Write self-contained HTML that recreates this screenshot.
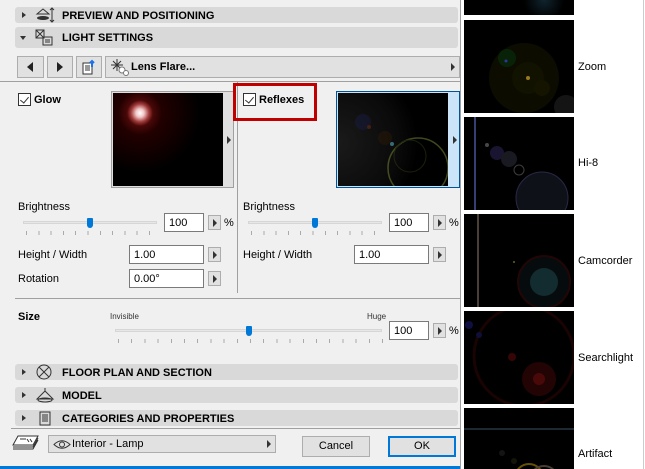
<!DOCTYPE html>
<html><head><meta charset="utf-8"><style>
*{box-sizing:border-box;margin:0;padding:0}
html,body{width:645px;height:469px;overflow:hidden}
body{background:#fff;font-family:"Liberation Sans",sans-serif;font-size:11px;color:#000;position:relative}
.a{position:absolute}
#dlg{left:0;top:0;width:461px;height:469px;background:#f0f0f0;border-right:1px solid #a0a0a0;overflow:hidden}
.hdr{position:absolute;left:15px;width:443px;background:#d9d9d9;border-radius:3px;font-weight:bold;font-size:11px;line-height:16px}
.hdr .t{position:absolute;left:47px;top:1px}
.hdr .tri{position:absolute;left:7px;top:5px;width:0;height:0;border-left:4px solid #333;border-top:3px solid transparent;border-bottom:3px solid transparent}
.btn{position:absolute;background:#e1e1e1;border:1px solid #adadad}
.inp{position:absolute;background:#fff;border:1px solid #7a7a7a;padding-left:4px;padding-top:1px;font-size:11px;line-height:16px}
.ab{position:absolute;width:13px;height:15px;background:#e1e1e1;border:1px solid #adadad}
.ab:after{content:"";position:absolute;left:4px;top:3px;border-left:4px solid #333;border-top:4px solid transparent;border-bottom:4px solid transparent}
.cb{position:absolute;width:13px;height:13px;border:1px solid #333;background:#fff}
.cb:after{content:"";position:absolute;left:3px;top:1px;width:4px;height:7px;border-right:1.5px solid #333;border-bottom:1.5px solid #333;transform:rotate(40deg)}
.track{position:absolute;height:3px;background:#e7e7e7;border:1px solid #d6d6d6}
.thumb{position:absolute;width:6px;height:10px;background:#0078d7;border-radius:1px 1px 3px 3px}
.ticks{position:absolute;height:4px;background:repeating-linear-gradient(90deg,#aaa 0 1px,transparent 1px 12.3px)}
.th{position:absolute;left:464px;width:110px;background:#000;overflow:hidden}
.th svg{opacity:.6;display:block}
.lbl{position:absolute;left:578px;font-size:11px}
</style></head><body>
<div id="dlg" class="a">
<div class="hdr" style="top:7px;height:16px"><div class="tri"></div>
<svg class="a" style="left:19px;top:0" width="22" height="16"><path d="M3 7 L9 2 L15 7 Z" fill="none" stroke="#333"/><ellipse cx="9" cy="11" rx="6" ry="2" fill="#333"/><path d="M18 1v14M16 3l2-2 2 2M16 13l2 2 2-2" stroke="#333" fill="none"/></svg>
<div class="t">PREVIEW AND POSITIONING</div></div>
<div class="hdr" style="top:27px;height:21px;line-height:21px"><div class="tri" style="left:5px;top:9px;border-left:3px solid transparent;border-right:3px solid transparent;border-top:4px solid #333;border-bottom:0"></div>
<svg class="a" style="left:19px;top:2px" width="22" height="17"><rect x="2" y="1" width="8" height="8" fill="none" stroke="#333"/><path d="M2 1l8 8M10 1l-8 8" stroke="#333"/><rect x="9" y="8" width="9" height="8" fill="none" stroke="#333"/><path d="M11 11h5M11 13h5" stroke="#333"/></svg>
<div class="t" style="top:1px">LIGHT SETTINGS</div></div>
<div class="btn" style="left:17px;top:56px;width:27px;height:22px"><div class="a" style="left:9px;top:5px;border-right:6px solid #222;border-top:5px solid transparent;border-bottom:5px solid transparent"></div></div>
<div class="btn" style="left:47px;top:56px;width:26px;height:22px"><div class="a" style="left:9px;top:5px;border-left:6px solid #222;border-top:5px solid transparent;border-bottom:5px solid transparent"></div></div>
<div class="btn" style="left:76px;top:56px;width:26px;height:22px"><svg class="a" style="left:5px;top:2px" width="16" height="17"><rect x="1" y="4" width="9" height="11" fill="#fff" stroke="#333"/><path d="M3 7h5M3 9h5M3 11h5" stroke="#333"/><path d="M10 8V2M8 4l2-2 2 2" stroke="#1a73e8" stroke-width="2" fill="none"/></svg></div>
<div class="btn" style="left:105px;top:56px;width:355px;height:22px"><svg class="a" style="left:3px;top:1px" width="22" height="19"><path d="M8 1v12M2 7h12M4 3l8 8M12 3l-8 8" stroke="#333"/><circle cx="13" cy="12" r="3" fill="#fff" stroke="#777"/><circle cx="17" cy="15" r="2.5" fill="#fff" stroke="#777"/></svg><div class="a" style="left:25px;top:4px;font-weight:bold">Lens Flare...</div><div class="a" style="right:4px;top:6px;border-left:4px solid #333;border-top:4px solid transparent;border-bottom:4px solid transparent"></div></div>
<div class="a" style="left:0;top:81px;width:460px;height:1px;background:#a0a0a0"></div>
<div class="a" style="left:237px;top:82px;width:1px;height:211px;background:#a0a0a0"></div>
<div class="cb" style="left:18px;top:93px"></div><div class="a" style="left:34px;top:94px;font-weight:bold">Glow</div>
<div class="a" style="left:111px;top:91px;width:123px;height:97px;background:#e0e0e0;border:1px solid #a0a0a0"><div class="a" style="left:1px;top:1px;width:110px;height:93px;background:radial-gradient(circle at 27px 20px,#fff 0,#f3c9c9 4px,#a03a3a 9px,#4a0808 13px,#200 22px,#000 60px)"></div><div class="a" style="right:2px;top:44px;border-left:4px solid #333;border-top:4px solid transparent;border-bottom:4px solid transparent"></div></div>
<div class="a" style="left:233px;top:83px;width:84px;height:38px;border:3px solid #c00000"></div>
<div class="cb" style="left:243px;top:93px"></div><div class="a" style="left:259px;top:94px;font-weight:bold">Reflexes</div>
<div class="a" style="left:336px;top:91px;width:124px;height:97px;background:#cce4f7;border:1px solid #005499"><div class="a" style="left:1px;top:1px;width:110px;height:93px;background:radial-gradient(circle at 0 50px,#1a1a1a 0,#0a0a0a 60px,#000 80px)"><svg width="110" height="93" style="opacity:.6"><circle cx="25" cy="29" r="8" fill="#1a1f4a" opacity=".7"/><circle cx="31" cy="34" r="2" fill="#6a2a10"/><circle cx="47" cy="45" r="7" fill="#2a1a05" opacity=".8"/><circle cx="54" cy="51" r="2" fill="#5ab"/><circle cx="80" cy="75" r="30" fill="none" stroke="#6a7a30" stroke-width="1.5"/><circle cx="72" cy="63" r="16" fill="none" stroke="#2a3a10"/></svg></div><div class="a" style="right:2px;top:44px;border-left:4px solid #333;border-top:4px solid transparent;border-bottom:4px solid transparent"></div></div>

<div class="a" style="left:18px;top:201px">Brightness</div>
<div class="track" style="left:23px;top:221px;width:134px"></div><div class="thumb" style="left:87px;top:218px"></div><div class="ticks" style="left:26px;top:231px;width:130px"></div>
<div class="inp" style="left:164px;top:213px;width:40px;height:19px">100</div><div class="ab" style="left:208px;top:215px"></div><div class="a" style="left:224px;top:217px">%</div>
<div class="a" style="left:18px;top:249px">Height / Width</div>
<div class="inp" style="left:129px;top:245px;width:75px;height:19px">1.00</div><div class="ab" style="left:208px;top:247px"></div>
<div class="a" style="left:18px;top:273px">Rotation</div>
<div class="inp" style="left:129px;top:269px;width:75px;height:19px">0.00°</div><div class="ab" style="left:208px;top:271px"></div>

<div class="a" style="left:243px;top:201px">Brightness</div>
<div class="track" style="left:248px;top:221px;width:134px"></div><div class="thumb" style="left:312px;top:218px"></div><div class="ticks" style="left:251px;top:231px;width:130px"></div>
<div class="inp" style="left:389px;top:213px;width:40px;height:19px">100</div><div class="ab" style="left:433px;top:215px"></div><div class="a" style="left:449px;top:217px">%</div>
<div class="a" style="left:243px;top:249px">Height / Width</div>
<div class="inp" style="left:354px;top:245px;width:75px;height:19px">1.00</div><div class="ab" style="left:433px;top:247px"></div>

<div class="a" style="left:15px;top:298px;width:445px;height:1px;background:#a0a0a0"></div>
<div class="a" style="left:18px;top:311px;font-weight:bold">Size</div>
<div class="a" style="left:110px;top:312px;font-size:8px;color:#333">Invisible</div>
<div class="a" style="left:367px;top:312px;font-size:8px;color:#333">Huge</div>
<div class="track" style="left:115px;top:329px;width:267px"></div><div class="thumb" style="left:246px;top:326px"></div><div class="ticks" style="left:118px;top:339px;width:265px;background:repeating-linear-gradient(90deg,#aaa 0 1px,transparent 1px 13.2px)"></div>
<div class="inp" style="left:389px;top:321px;width:40px;height:19px">100</div><div class="ab" style="left:433px;top:323px"></div><div class="a" style="left:449px;top:325px">%</div>

<div class="hdr" style="top:364px;height:16px"><div class="tri"></div><svg class="a" style="left:21px;top:0" width="16" height="16"><circle cx="8" cy="8" r="7" fill="none" stroke="#333"/><path d="M3 3l10 10M13 3L3 13" stroke="#333"/></svg><div class="t">FLOOR PLAN AND SECTION</div></div>
<div class="hdr" style="top:387px;height:16px"><div class="tri"></div><svg class="a" style="left:20px;top:0" width="22" height="16"><path d="M10 1v3M10 4L2 12h16Z" fill="none" stroke="#333"/><ellipse cx="10" cy="13" rx="7" ry="2" fill="none" stroke="#333"/></svg><div class="t">MODEL</div></div>
<div class="hdr" style="top:410px;height:16px"><div class="tri"></div><svg class="a" style="left:24px;top:1px" width="12" height="15"><rect x="1" y="1" width="10" height="13" fill="none" stroke="#333"/><path d="M3 4h6M3 6h6M3 8h6M3 10h6" stroke="#333"/></svg><div class="t">CATEGORIES AND PROPERTIES</div></div>
<div class="a" style="left:11px;top:428px;width:449px;height:1px;background:#a0a0a0"></div>
<svg class="a" style="left:12px;top:434px" width="28" height="18"><path d="M6 2h20l-5 9H1Z" fill="#fff" stroke="#333"/><path d="M1 13h20l5-9M1 15h20l5-9" fill="none" stroke="#333"/><path d="M8 5h6M15 5l2 3M18 5l2 3" stroke="#333"/></svg>
<div class="btn" style="left:48px;top:435px;width:228px;height:18px"><svg class="a" style="left:4px;top:3px" width="18" height="11"><path d="M1 5.5Q9-2 17 5.5Q9 13 1 5.5Z" fill="none" stroke="#333"/><circle cx="9" cy="5.5" r="2.5" fill="none" stroke="#333"/></svg><div class="a" style="left:23px;top:2px">Interior - Lamp</div><div class="a" style="right:4px;top:4px;border-left:4px solid #333;border-top:4px solid transparent;border-bottom:4px solid transparent"></div></div>
<div class="btn" style="left:302px;top:436px;width:68px;height:21px;text-align:center;line-height:19px">Cancel</div>
<div class="btn" style="left:388px;top:436px;width:68px;height:21px;text-align:center;line-height:17px;border:2px solid #0078d7">OK</div>
<div class="a" style="left:0;top:466px;width:460px;height:3px;background:#0078d7"></div>
</div>
<div class="a" style="left:643px;top:0;width:1px;height:469px;background:#ccc"></div>
<div class="th" style="top:0;height:15px;background:radial-gradient(circle at 80px 0,#10242e 0,#000 20px)"></div>
<div class="th" style="top:20px;height:93px"><svg width="110" height="93"><circle cx="60" cy="58" r="35" fill="#141400"/><circle cx="43" cy="38" r="9" fill="#0e3a0e"/><circle cx="42" cy="41" r="1.5" fill="#55f"/><circle cx="64" cy="58" r="16" fill="#1f1f00"/><circle cx="64" cy="58" r="2" fill="#fc3"/><circle cx="78" cy="68" r="8" fill="#222200"/><circle cx="102" cy="87" r="12" fill="#222"/></svg></div>
<div class="th" style="top:117px;height:93px"><svg width="110" height="93"><rect x="10" y="0" width="2" height="93" fill="#5a6ac0"/><circle cx="23" cy="28" r="2" fill="#777"/><circle cx="33" cy="36" r="7" fill="#2a2250"/><circle cx="45" cy="42" r="8" fill="#2a2a3a"/><circle cx="55" cy="53" r="5" fill="none" stroke="#666"/><circle cx="78" cy="81" r="26" fill="#1a1d28" stroke="#447"/></svg></div>
<div class="th" style="top:214px;height:93px"><svg width="110" height="93"><rect x="13" y="0" width="2" height="93" fill="#7a6a5a"/><circle cx="80" cy="68" r="26" fill="#0a1518" stroke="#3a0a0a" stroke-width="2"/><circle cx="80" cy="68" r="14" fill="#1f4a50"/><circle cx="50" cy="48" r="1" fill="#aa3"/></svg></div>
<div class="th" style="top:311px;height:93px"><svg width="110" height="93"><circle cx="60" cy="45" r="50" fill="none" stroke="#2a0505" stroke-width="3"/><circle cx="5" cy="14" r="4" fill="#1a1a70"/><circle cx="15" cy="24" r="3" fill="#1a1a60"/><circle cx="48" cy="46" r="4" fill="#5a0a0a"/><circle cx="75" cy="68" r="17" fill="#3a0808"/><circle cx="75" cy="68" r="6" fill="#7a1010"/></svg></div>
<div class="th" style="top:408px;height:61px"><svg width="110" height="61"><rect x="0" y="20" width="110" height="2" fill="#345"/><circle cx="38" cy="45" r="3" fill="#222"/><circle cx="50" cy="53" r="3" fill="#221"/><circle cx="65" cy="70" r="14" fill="none" stroke="#aa8800" stroke-width="2"/><circle cx="80" cy="72" r="14" fill="none" stroke="#776655" stroke-width="2"/></svg></div>
<div class="lbl" style="top:61px">Zoom</div>
<div class="lbl" style="top:157px">Hi-8</div>
<div class="lbl" style="top:255px">Camcorder</div>
<div class="lbl" style="top:352px">Searchlight</div>
<div class="lbl" style="top:448px">Artifact</div>
</body></html>
